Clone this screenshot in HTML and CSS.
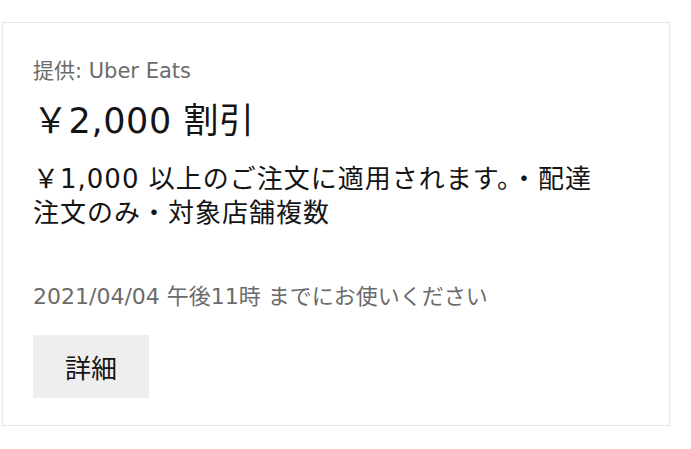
FILE: index.html
```html
<!DOCTYPE html>
<html lang="ja">
<head>
  <meta charset="UTF-8">
  <meta name="viewport" content="width=device-width, initial-scale=1.0">
  <title>プロモーション</title>
  <link rel="stylesheet" href="styles.css">
</head>
<body>

<div class="promoCard">
  <p class="provider">提供: Uber Eats</p>
  <h1 class="promoTitle">￥2,000 割引</h1>
  <p class="promoDesc">￥1,000 以上のご注文に適用されます。・配達注文のみ・対象店舗複数</p>
  <p class="expiry">2021/04/04 午後11時 までにお使いください</p>
  <button class="detailBtn">詳細</button>
</div>

</body>
</html>
```

FILE: styles.css
```css
body {
  font-family: "DejaVu Sans", "Noto Sans CJK JP", sans-serif;
  background-color: #fff;
  color: #141414;
  margin: 0;
  padding: 22px 0 0 2px;
}

.promoCard {
  width: 668px;
  height: 404px;
  box-sizing: border-box;
  border: 1px solid #e6e6e6;
  box-shadow: 0 0 2px rgba(0, 0, 0, 0.06);
  padding: 36px 30px 0 30px;
}

.provider {
  margin: 0;
  font-size: 21px;
  line-height: 24px;
  color: #6b6b6b;
}

.promoTitle {
  margin: 16px 0 0 0;
  font-size: 35px;
  line-height: 44px;
  font-weight: normal;
  letter-spacing: 0.6px;
}

.promoDesc {
  margin: 19px 0 0 0;
  width: 565px;
  font-size: 26px;
  line-height: 34px;
  letter-spacing: 1px;
}

.expiry {
  margin: 55px 0 0 0;
  font-size: 22px;
  line-height: 24px;
  color: #6b6b6b;
}

.detailBtn {
  margin-top: 26px;
  width: 116px;
  height: 63px;
  border: none;
  border-radius: 0;
  background-color: #eeeeee;
  font-family: inherit;
  font-size: 26px;
  color: #141414;
  cursor: pointer;
}
```
